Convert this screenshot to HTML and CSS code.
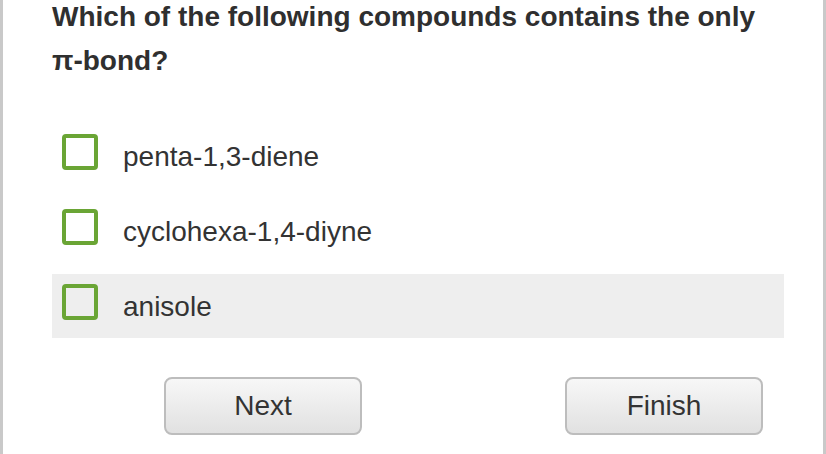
FILE: index.html
```html
<!DOCTYPE html>
<html lang="en">

<head>
    <meta charset="UTF-8">
    <meta name="viewport" content="width=device-width, initial-scale=1.0">
    <title>Quiz Question</title>
    <link rel="stylesheet" href="styles.css">
</head>

<body>

    <div class="frame">
        <div class="question">
            Which of the following compounds contains the only π-bond?
        </div>

        <!-- Answer options -->
        <div class="options">
            <label class="option">
                <span class="check"></span>
                <span class="option-text">penta-1,3-diene</span>
            </label>
            <label class="option">
                <span class="check"></span>
                <span class="option-text">cyclohexa-1,4-diyne</span>
            </label>
            <label class="option hover">
                <span class="check"></span>
                <span class="option-text">anisole</span>
            </label>
        </div>

        <div class="button-row">
            <button type="button">Next</button>
            <button type="button">Finish</button>
        </div>
    </div>

</body>

</html>
```

FILE: styles.css
```css
body {
    font-family: 'Liberation Sans', Arial, Helvetica, sans-serif;
    background-color: #fff;
    color: #333;
    margin: 0;
    padding: 0;
}

.frame {
    box-sizing: border-box;
    width: 826px;
    height: 454px;
    border-left: 3px solid #c9c9c9;
    border-right: 3px solid #c9c9c9;
    padding: 0 39px 0 49px;
    overflow: hidden;
}

.question {
    font-size: 28px;
    font-weight: bold;
    line-height: 44px;
    margin-top: -5px;
    color: #2f2f2f;
}

.options {
    display: flex;
    flex-direction: column;
    gap: 11px;
    margin-top: 41px;
}

.option {
    display: flex;
    align-items: flex-start;
    height: 64px;
    box-sizing: border-box;
    padding: 10px 10px 0;
    cursor: pointer;
}

.option.hover {
    background-color: #eeeeee;
}

.check {
    box-sizing: border-box;
    width: 36px;
    height: 36px;
    border: 4px solid #6aa535;
    border-radius: 4px;
    flex: 0 0 auto;
}

.option-text {
    font-size: 28px;
    line-height: 36px;
    padding-top: 5px;
    margin-left: 25px;
}

.button-row {
    display: flex;
    justify-content: space-between;
    padding: 0 21px 0 112px;
    margin-top: 39px;
}

button {
    width: 198px;
    height: 58px;
    font-family: inherit;
    font-size: 28px;
    color: #333;
    background: linear-gradient(#f7f7f7, #e1e1e1);
    border: 2px solid #bdbdbd;
    border-radius: 8px;
    cursor: pointer;
}
```
